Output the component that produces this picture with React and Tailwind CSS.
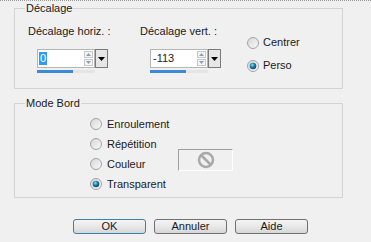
import React from 'react'

function Radio({ checked }) {
  return (
    <svg width="12" height="12" viewBox="0 0 12 12" className="shrink-0">
      <defs>
        <linearGradient id="rb" x1="0" y1="0" x2="1" y2="1">
          <stop offset="0" stopColor="#d6d6d6" />
          <stop offset="1" stopColor="#fafafa" />
        </linearGradient>
        <radialGradient id="rd" cx="0.4" cy="0.35" r="0.7">
          <stop offset="0" stopColor="#8fe0f8" />
          <stop offset="0.45" stopColor="#1f86b0" />
          <stop offset="1" stopColor="#123f55" />
        </radialGradient>
      </defs>
      <circle cx="6" cy="6" r="5.5" fill="url(#rb)" stroke="#a3a3a3" strokeWidth="1" />
      {checked && <circle cx="6" cy="6" r="3.3" fill="url(#rd)" />}
    </svg>
  )
}

function SpinField({ value, selected }) {
  return (
    <div className="flex flex-col">
      <div className="flex h-[19px]">
        <div className="flex w-[58px] items-center border border-[#b5b5b5] bg-white pl-[1px]">
          <span className={selected ? 'bg-[#3399ff] px-[1px] text-white' : 'px-[1px]'}>{value}</span>
          <div className="ml-auto mr-[1px] flex flex-col gap-[1px]">
            <div className="flex h-[7px] w-[9px] items-center justify-center border border-[#c8c8c8] bg-[#f4f4f4]">
              <svg width="5" height="3" viewBox="0 0 5 3"><path d="M0 3 L2.5 0 L5 3 Z" fill="#8aa0b8" /></svg>
            </div>
            <div className="flex h-[7px] w-[9px] items-center justify-center border border-[#c8c8c8] bg-[#f4f4f4]">
              <svg width="5" height="3" viewBox="0 0 5 3"><path d="M0 0 L2.5 3 L5 0 Z" fill="#8aa0b8" /></svg>
            </div>
          </div>
        </div>
        <div className="flex w-[13px] items-center justify-center border border-[#7a7a7a] bg-[#e6e6e6]">
          <svg width="7" height="4" viewBox="0 0 7 4"><path d="M0 0 L3.5 4 L7 0 Z" fill="#000" /></svg>
        </div>
      </div>
      <div className="mt-[2px] h-[3px] w-[58px] bg-[#e4e4e4]">
        <div className="h-full w-[36px] bg-[#3a8ad6]" />
      </div>
    </div>
  )
}

function Btn({ children, def }) {
  return (
    <button
      className={
        'h-[15px] w-[73px] rounded-[3px] border bg-gradient-to-b from-[#f4f4f4] via-[#e8e8e8] to-[#d6d6d6] text-[11px] font-normal leading-[13px] text-[#1a1a1a] ' +
        (def ? 'border-[#3c7fb1]' : 'border-[#707070]')
      }
    >
      {children}
    </button>
  )
}

export default function App() {
  return (
    <div className="h-[242px] w-[371px] overflow-hidden border-t border-dotted border-[#9a9a9a] bg-[#f0f0f0] font-['Liberation_Sans',sans-serif] text-[11px] leading-[13px] text-[#1a1a1a]">
      <fieldset className="mt-[1px] ml-[14px] h-[87px] w-[329px] border border-[#d3d3d3] p-0">
        <legend className="ml-[10px] px-[1px]">Décalage</legend>
        <div className="flex pt-[10px] pl-[13px]">
          <div className="w-[112px]">
            <div>Décalage horiz. :</div>
            <div className="mt-[11px] ml-[9px]">
              <SpinField value="0" selected />
            </div>
          </div>
          <div className="w-[107px]">
            <div>Décalage vert. :</div>
            <div className="mt-[11px] ml-[10px]">
              <SpinField value="-113" />
            </div>
          </div>
          <div className="mt-[11px] flex flex-col gap-[10px]">
            <div className="flex items-center gap-[4px]">
              <Radio />
              <span>Centrer</span>
            </div>
            <div className="flex items-center gap-[4px]">
              <Radio checked />
              <span>Perso</span>
            </div>
          </div>
        </div>
      </fieldset>

      <fieldset className="mt-[8px] ml-[14px] h-[101px] w-[329px] border border-[#d3d3d3] p-0">
        <legend className="ml-[10px] px-[1px]">Mode Bord</legend>
        <div className="flex pt-[4px] pl-[75px]">
          <div className="flex w-[88px] flex-col">
            {[
              ['Enroulement', false],
              ['Répétition', false],
              ['Couleur', false],
              ['Transparent', true],
            ].map(([t, c]) => (
              <div key={t} className="flex h-[20px] items-center gap-[5px]">
                <Radio checked={c} />
                <span>{t}</span>
              </div>
            ))}
          </div>
          <div className="mt-[35px] flex h-[22px] w-[55px] items-center justify-center border border-t-[#a0a0a0] border-l-[#a0a0a0] border-r-white border-b-white">
            <svg width="18" height="18" viewBox="0 0 18 18">
              <circle cx="9" cy="9" r="7" fill="none" stroke="#a9a9a9" strokeWidth="2.5" />
              <path d="M4 4 L14 14" stroke="#a9a9a9" strokeWidth="2.5" />
            </svg>
          </div>
        </div>
      </fieldset>

      <div className="mt-[21px] flex gap-[8px] pl-[73px]">
        <Btn def>OK</Btn>
        <Btn>Annuler</Btn>
        <Btn>Aide</Btn>
      </div>
    </div>
  )
}
